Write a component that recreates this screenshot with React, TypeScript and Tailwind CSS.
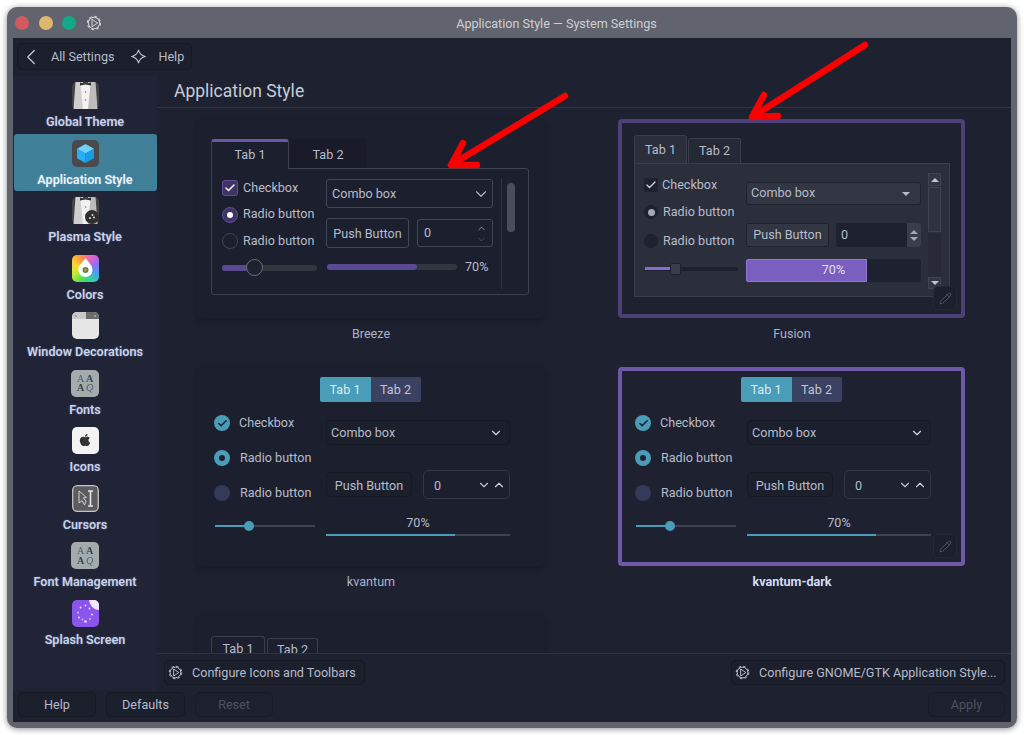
import { Check, ChevronDown, ChevronLeft, ChevronUp, Pencil } from 'lucide-react';
import { FaApple } from 'react-icons/fa';
import type { ReactNode } from 'react';

function GearPlay({ className }: { className?: string }) {
  return (
    <svg viewBox="0 0 18 18" className={className} fill="none" stroke="currentColor">
      <circle cx="9" cy="9" r="6.4" strokeWidth="1.2" />
      <circle cx="9" cy="9" r="7.5" strokeWidth="1.2" strokeDasharray="3 2.9" />
      <path d="M6.8 4.8 L13 9 L6.8 13.2 Z" strokeWidth="1.1" strokeLinejoin="round" />
    </svg>
  );
}

function Tuxedo({ badge }: { badge?: boolean }) {
  return (
    <svg viewBox="0 0 27 27" className="w-[27px] h-[27px]">
      <rect width="27" height="27" rx="5" fill="#444446" />
      <path d="M3.5 0 H11 L13 27 H1.5 Z" fill="#cfcfcf" />
      <path d="M23.5 0 H16 L14 27 H25.5 Z" fill="#bcbcbc" />
      <path d="M8.5 2 H18.5 L16 27 H11 Z" fill="#f2f2f2" />
      <path d="M8 0.5 L13.5 2 L19 0.5 V3.5 L13.5 2.6 L8 3.5 Z" fill="#2e2e2e" />
      <circle cx="13.5" cy="10" r="0.8" fill="#777" />
      <circle cx="13.5" cy="18" r="0.8" fill="#777" />
      {badge && (
        <>
          <circle cx="20" cy="20" r="7" fill="#2f2f2f" />
          <circle cx="18" cy="21" r="1" fill="#ddd" />
          <circle cx="20.5" cy="18" r="1" fill="#ddd" />
          <circle cx="22" cy="20.5" r="1" fill="#ddd" />
        </>
      )}
    </svg>
  );
}

function Cube() {
  return (
    <svg viewBox="0 0 27 27" className="w-[27px] h-[27px]">
      <rect width="27" height="27" rx="5" fill="#4a4a4c" />
      <path d="M13.5 4 L22 8.7 L13.5 13.5 L5 8.7 Z" fill="#6fd0fa" />
      <path d="M5 8.7 L13.5 13.5 V23 L5 18.2 Z" fill="#26b0f3" />
      <path d="M22 8.7 L13.5 13.5 V23 L22 18.2 Z" fill="#1c9be8" />
    </svg>
  );
}

function Colors() {
  return (
    <div className="w-[27px] h-[27px] rounded-[5px] flex items-center justify-center bg-[conic-gradient(from_20deg,#f062c0,#9a6cf0,#4a9cf0,#38d0a0,#50e050,#c8e838,#f8d838,#f89838,#f062c0)]">
      <svg viewBox="0 0 27 27" className="w-[27px] h-[27px]">
        <path d="M13.5 3 C16 7 20.5 10 20.5 15 A7 7 0 0 1 6.5 15 C6.5 10 11 7 13.5 3 Z" fill="#fff" />
        <circle cx="13.5" cy="15" r="3" fill="#3f8f5a" />
        <circle cx="13.5" cy="15" r="1.4" fill="#e0883c" />
      </svg>
    </div>
  );
}

function WindowDeco() {
  return (
    <svg viewBox="0 0 27 27" className="w-[27px] h-[27px]">
      <rect width="27" height="27" rx="5" fill="#e6e6e6" />
      <path d="M5 0 H14 V7 H0 V5 A5 5 0 0 1 5 0 Z" fill="#c9c9c9" />
      <path d="M14 0 H22 A5 5 0 0 1 27 5 V7 H14 Z" fill="#6b6b6b" />
      <circle cx="4" cy="4" r="0.8" fill="#666" />
      <circle cx="23" cy="4" r="0.8" fill="#ddd" />
    </svg>
  );
}

function FontsIcon() {
  return (
    <div className="w-[28px] h-[27px] rounded-[5px] bg-[#a3acab] grid grid-cols-2 items-center justify-items-center px-[5px] py-[4px] text-[#3c4042] text-[10px] leading-[9px] font-['Liberation_Serif',serif] font-bold">
      <span className="font-normal text-[#555b5d]">A</span>
      <span>A</span>
      <span>A</span>
      <span className="font-normal italic text-[#555b5d]">Q</span>
    </div>
  );
}

function AppleIcon() {
  return (
    <div className="w-[27px] h-[27px] rounded-[5px] bg-[#f3f3f3] flex items-center justify-center">
      <FaApple className="w-[14px] h-[14px] text-[#333] -mt-px" />
    </div>
  );
}

function CursorIcon() {
  return (
    <svg viewBox="0 0 27 27" className="w-[27px] h-[27px]">
      <rect x="0.7" y="0.7" width="25.6" height="25.6" rx="4.5" fill="#5c5c5e" stroke="#c4c4c4" strokeWidth="1.3" />
      <path d="M7 6 L7 18 L10 15.5 L12.5 20 L14 16 L11 13 L14.5 12.5 Z" fill="none" stroke="#cfcfcf" strokeWidth="1" />
      <path d="M16 6 H21 M16 21 H21 M18.5 6 V21" stroke="#e4e4e4" strokeWidth="1.6" fill="none" />
    </svg>
  );
}

function SplashIcon() {
  const dots = [
    [13.5, 5.5], [8.5, 7.5], [6, 12.5], [7, 17.5], [13.5, 21.5], [18, 19], [20, 14.5], [17.5, 8.5], [10.5, 19.5],
  ];
  return (
    <svg viewBox="0 0 27 27" className="w-[27px] h-[27px]">
      <rect width="27" height="27" rx="5" fill="#8a55ec" />
      {dots.map(([cx, cy], i) => (
        <circle key={i} cx={cx} cy={cy} r={i === 4 ? 1.3 : 0.9} fill="#f0e8ff" opacity={i % 3 === 2 ? 0.7 : 1} />
      ))}
      <path d="M17 0 H22 A5 5 0 0 1 27 5 V10 C22 10 18 6 17 0 Z" fill="#efe8fb" />
    </svg>
  );
}

const sidebarItems: { label: string; icon: ReactNode; active?: boolean }[] = [
  { label: 'Global Theme', icon: <Tuxedo /> },
  { label: 'Application Style', icon: <Cube />, active: true },
  { label: 'Plasma Style', icon: <Tuxedo badge /> },
  { label: 'Colors', icon: <Colors /> },
  { label: 'Window Decorations', icon: <WindowDeco /> },
  { label: 'Fonts', icon: <FontsIcon /> },
  { label: 'Icons', icon: <AppleIcon /> },
  { label: 'Cursors', icon: <CursorIcon /> },
  { label: 'Font Management', icon: <FontsIcon /> },
  { label: 'Splash Screen', icon: <SplashIcon /> },
];

function BreezePreview() {
  return (
    <div className="pl-[10px] pt-[16px]">
      {/* tabs */}
      <div className="flex h-[29px]">
        <div className="w-[78px] h-[30px] relative z-10 bg-[#1c1f2d] border-x border-[#3f4250] border-t-[3px] border-t-[#6a54a8] rounded-t-[3px] flex items-center justify-center">Tab 1</div>
        <div className="w-[78px] bg-[#191b28] rounded-tr-[3px] pt-[3px] flex items-center justify-center">Tab 2</div>
      </div>
      <div className="w-[318px] h-[127px] border border-[#3f4250] rounded-b-[3px] rounded-tr-[3px] flex pl-[10px] pt-[10px]">
        <div className="w-[104px] flex flex-col gap-[8.5px]">
          <div className="h-[18px] flex items-center gap-[5px]">
            <div className="w-[16px] h-[16px] rounded-[3px] bg-[#3f3564] border border-[#5f4d94] flex items-center justify-center">
              <Check className="w-[12px] h-[12px] text-white" strokeWidth={3} />
            </div>
            Checkbox
          </div>
          <div className="h-[18px] flex items-center gap-[5px]">
            <div className="w-[16px] h-[16px] rounded-full bg-[#3f3564] border border-[#5f4d94] flex items-center justify-center">
              <div className="w-[6px] h-[6px] rounded-full bg-white" />
            </div>
            Radio button
          </div>
          <div className="h-[18px] flex items-center gap-[5px]">
            <div className="w-[16px] h-[16px] rounded-full border border-[#41444f]" />
            Radio button
          </div>
          <div className="h-[18px] flex items-center">
            <div className="w-[95px] h-[6px] rounded-full bg-[#33363f] relative">
              <div className="w-[26px] h-[6px] rounded-full bg-[#5a4a93]" />
              <div className="absolute left-[24px] -top-[6px] w-[17px] h-[17px] rounded-full bg-[#1e2130] border border-[#6d707b]" />
            </div>
          </div>
        </div>
        <div className="w-[167px] flex flex-col gap-[10px]">
          <div className="h-[29px] pt-px border border-[#434653] rounded-[3px] flex items-center justify-between pl-[5px] pr-[2px]">
            Combo box
            <ChevronDown className="w-[18px] h-[18px] text-[#b6bccb]" strokeWidth={1.5} />
          </div>
          <div className="flex items-center gap-[8px] h-[30px]">
            <div className="w-[83px] h-[30px] pt-[2px] border border-[#434653] rounded-[3px] flex items-center justify-center">Push Button</div>
            <div className="w-[76px] h-[28px] pt-px border border-[#434653] rounded-[3px] flex items-center justify-between pl-[6px] pr-[2px]">
              0
              <div className="flex flex-col">
                <ChevronUp className="w-[17px] h-[11px] text-[#b6bccb]" strokeWidth={1.5} />
                <ChevronDown className="w-[17px] h-[11px] text-[#5c606c]" strokeWidth={1.5} />
              </div>
            </div>
          </div>
          <div className="h-[18px] flex items-center whitespace-nowrap">
            <div className="w-[130px] ml-px h-[6px] rounded-full bg-[#33363f]">
              <div className="w-[90px] h-[6px] rounded-full bg-[#5a4a93]" />
            </div>
            <span className="ml-[8px] pt-px">70%</span>
          </div>
        </div>
        <div className="w-px h-[111px] -mt-px bg-[#30333f] ml-[8px]" />
        <div className="w-[8px] h-[49px] mt-[4px] ml-[5px] rounded-full bg-[#4a4d5e]" />
      </div>
    </div>
  );
}

function FusionPreview() {
  return (
    <div className="pl-[12px] pt-[13px]">
      <div className="flex items-end h-[27px] gap-px">
        <div className="w-[53px] h-[28px] pt-px relative z-10 bg-[#2b2e3b] border border-b-0 border-[#3a3d4a] rounded-t-[3px] flex items-center justify-center">Tab 1</div>
        <div className="w-[53px] h-[25px] bg-[#252835] border border-b-0 border-[#3a3d4a] rounded-t-[3px] flex items-center justify-center">Tab 2</div>
      </div>
      <div className="w-[316px] h-[134px] bg-[#2b2e3b] border border-[#3a3d4a] flex pl-[9px] pt-[12px]">
        <div className="w-[102px]">
          <div className="h-[18px] flex items-center gap-[4px]">
            <div className="w-[14px] h-[14px] rounded-[2px] bg-[#1e2130] flex items-center justify-center">
              <Check className="w-[12px] h-[12px] text-[#d5d8e0]" strokeWidth={2.5} />
            </div>
            Checkbox
          </div>
          <div className="h-[18px] mt-[9px] flex items-center gap-[5px]">
            <div className="w-[14px] h-[14px] rounded-full bg-[#1e2130] flex items-center justify-center">
              <div className="w-[7px] h-[7px] rounded-full bg-[#a6a9b4]" />
            </div>
            Radio button
          </div>
          <div className="h-[18px] mt-[11px] flex items-center gap-[5px]">
            <div className="w-[14px] h-[14px] rounded-full bg-[#1e2130]" />
            Radio button
          </div>
          <div className="h-[18px] mt-[10px] flex items-center pl-px">
            <div className="w-[93px] h-[4px] rounded-full bg-[#1e2130] relative">
              <div className="w-[25px] h-[3px] bg-[#8a6bd0]" />
              <div className="absolute left-[25px] -top-[4px] w-[11px] h-[12px] rounded-[2px] bg-[#3a3d4a] border border-[#1e2130]" />
            </div>
          </div>
        </div>
        <div className="w-[175px]">
          <div className="h-[23px] mt-[6px] bg-[#323542] border border-[#20222e] rounded-[3px] flex items-center justify-between pl-[4px] pr-[10px]">
            Combo box
            <div className="w-0 h-0 border-x-[4px] border-x-transparent border-t-[4px] border-t-[#b6bccb]" />
          </div>
          <div className="flex gap-[7px] mt-[18px]">
            <div className="w-[83px] h-[24px] bg-[#323542] border border-[#20222e] rounded-[2px] flex items-center justify-center">Push Button</div>
            <div className="w-[85px] h-[24px] bg-[#1e2130] rounded-[3px] flex items-center justify-between pl-[5px]">
              0
              <div className="w-[14px] h-[24px] bg-[#3a3d4a] rounded-r-[3px] flex flex-col items-center justify-center gap-[3px]">
                <div className="w-0 h-0 border-x-[4px] border-x-transparent border-b-[4px] border-b-[#a6a9b4]" />
                <div className="w-0 h-0 border-x-[4px] border-x-transparent border-t-[4px] border-t-[#a6a9b4]" />
              </div>
            </div>
          </div>
          <div className="h-[23px] mt-[12px] bg-[#1e2130] rounded-[3px] relative">
            <div className="w-[121px] h-[23px] bg-[#7b5fc0] border border-[#9278d4] rounded-l-[2px]" />
            <span className="absolute inset-0 flex items-center justify-center text-[#e2dff0]">70%</span>
          </div>
        </div>
        <div className="w-[13px] ml-[7px] -mt-[3px] flex flex-col gap-px">
          <div className="h-[13px] bg-[#323542] border border-[#3f4250] flex items-center justify-center">
            <div className="w-0 h-0 border-x-[4px] border-x-transparent border-b-[4px] border-b-[#c0c3cc]" />
          </div>
          <div className="h-[45px] bg-[#2f323f] border border-[#3f4250]" />
          <div className="h-[43px] bg-[#272a36]" />
          <div className="h-[12px] bg-[#323542] border border-[#3f4250] flex items-center justify-center">
            <div className="w-0 h-0 border-x-[4px] border-x-transparent border-t-[4px] border-t-[#c0c3cc]" />
          </div>
        </div>
      </div>
    </div>
  );
}

function KvantumPreview() {
  return (
    <div className="pt-[6px]">
      <div className="flex justify-center h-[25px] pr-[1px]">
        <div className="w-[51px] pt-px bg-[#4a9db8] text-[#d8eaf0] rounded-l-[2px] flex items-center justify-center">Tab 1</div>
        <div className="w-[50px] pt-px bg-[#3b4160] text-[#c0c5d6] rounded-r-[2px] flex items-center justify-center">Tab 2</div>
      </div>
      <div className="flex pl-[13px]">
        <div className="w-[112px] pt-[11px] flex flex-col gap-[15px]">
          <div className="h-[20px] flex items-center gap-[9px]">
            <div className="w-[16px] h-[16px] rounded-full bg-[#4a9db8] flex items-center justify-center">
              <Check className="w-[11px] h-[11px] text-[#1e2130]" strokeWidth={3.5} />
            </div>
            Checkbox
          </div>
          <div className="h-[20px] flex items-center gap-[10px]">
            <div className="w-[16px] h-[16px] rounded-full border-[5px] border-[#4a9db8] bg-[#1e2130]" />
            Radio button
          </div>
          <div className="h-[20px] flex items-center gap-[10px]">
            <div className="w-[16px] h-[16px] rounded-full bg-[#343b5a]" />
            Radio button
          </div>
          <div className="h-[20px] -mt-[2px] flex items-center pl-px">
            <div className="w-[100px] h-[2px] bg-[#3f4250] relative">
              <div className="w-[30px] h-[2px] bg-[#4a9db8]" />
              <div className="absolute left-[29px] -top-[4px] w-[10px] h-[10px] rounded-full bg-[#4a9db8]" />
            </div>
          </div>
        </div>
        <div className="w-[184px]">
          <div className="h-[25px] mt-[18px] pt-[2px] bg-[#1c1f2c] border border-[#171923] rounded-[5px] flex items-center justify-between pl-[4px] pr-[6px]">
            Combo box
            <ChevronDown className="w-[14px] h-[14px] -mt-[2px] text-[#d0d4de]" strokeWidth={2} />
          </div>
          <div className="flex items-center gap-[11px] mt-[25px] h-[29px]">
            <div className="w-[86px] h-[25px] pt-[3px] bg-[#1c1f2c] border border-[#171923] rounded-[5px] flex items-center justify-center">Push Button</div>
            <div className="w-[87px] h-[29px] pt-[3px] border border-[#343746] rounded-[5px] flex items-center justify-between pl-[10px] pr-[3px]">
              0
              <div className="flex items-center gap-[1px] -mt-[3px]">
                <ChevronDown className="w-[14px] h-[14px] text-[#c0c4ce]" strokeWidth={2} />
                <ChevronUp className="w-[14px] h-[14px] text-[#d0d4de]" strokeWidth={2} />
              </div>
            </div>
          </div>
          <div className="h-[16px] mt-[16px] pt-px flex items-center justify-center">70%</div>
          <div className="h-[2px] mt-[3px] bg-[#3f4250]">
            <div className="w-[129px] h-[2px] bg-[#4a9db8]" />
          </div>
        </div>
      </div>
    </div>
  );
}

function EditButton() {
  return (
    <div className="absolute right-[4px] bottom-[4px] w-[24px] h-[24px] rounded-[5px] bg-[#1c1f2c] border border-[#252836] flex items-center justify-center">
      <Pencil className="w-[13px] h-[13px] text-[#5a5d69]" strokeWidth={1.5} />
    </div>
  );
}

function StyleCard({ name, children, border, edit, bold }: { name?: string; children: ReactNode; border?: string; edit?: boolean; bold?: boolean }) {
  return (
    <div className="h-[248px]">
      <div className={`relative h-[199px] w-[347px] border-4 rounded-[4px] ${border ?? 'border-transparent bg-[#1c1f2d] shadow-[0_3px_8px_rgba(0,0,0,0.25)]'}`}>
        {children}
        {edit && <EditButton />}
      </div>
      {name && (
        <div className={`h-[31px] pt-[2px] flex items-center justify-center ${bold ? 'font-bold text-[#d4dcf2]' : 'text-[#aab2c8]'}`}>{name}</div>
      )}
    </div>
  );
}

function Btn({ className, children, disabled }: { className?: string; children: ReactNode; disabled?: boolean }) {
  return (
    <div className={`h-[25px] pt-px rounded-[5px] border flex items-center ${disabled ? 'border-[#191b26] bg-[#1d202d] text-[#4f525e]' : 'border-[#171923] bg-[#1c1f2c] text-[#b6bccb]'} ${className ?? 'justify-center'}`}>
      {children}
    </div>
  );
}

export default function App() {
  return (
    <div className="relative w-[1024px] h-[735px] overflow-hidden bg-white pt-[7px] px-[7px] font-['Roboto',sans-serif] text-[12.6px] text-[#b6bccb]">
      <div className="w-[1010px] h-[721px] flex flex-col rounded-[10px] bg-[#61636e] shadow-[0_1px_6px_rgba(0,0,0,0.45)] px-[6px] pb-[6px]">
        {/* Title bar */}
        <div className="h-[31px] flex items-center relative">
          <div className="flex items-center gap-[9.5px] pl-[2px]">
            <div className="w-[14px] h-[14px] rounded-full bg-[#d05a5e]" />
            <div className="w-[14px] h-[14px] rounded-full bg-[#dfb66e]" />
            <div className="w-[14px] h-[14px] rounded-full bg-[#13a887]" />
            <GearPlay className="w-[16px] h-[16px] text-[#d0d1d6]" />
          </div>
          <div className="absolute inset-0 flex items-center justify-center text-[#cdd0d6] pl-[89px] pt-[4px]">Application Style — System Settings</div>
        </div>

        <div className="flex-1 flex flex-col bg-[#1e2130] min-h-0">
          {/* Toolbar */}
          <div className="h-[38px] pl-[4px] pt-[5px]">
            <div className="w-[175px] h-[27px] pt-px rounded-[5px] border border-[#171923] bg-[#1c1f2c] flex items-center">
              <ChevronLeft className="w-[26px] h-[26px] text-[#c4c8d2] -mt-px" strokeWidth={1.2} />
              <span className="ml-[7px]">All Settings</span>
              <svg viewBox="0 0 16 16" className="w-[15px] h-[15px] ml-[17px] -mt-px text-[#c4c8d2]" fill="none" stroke="currentColor" strokeWidth="1.1">
                <path d="M8 1 C8.8 4.5 11.5 7 15 8 C11.5 9 8.8 11.5 8 15 C7.2 11.5 4.5 9 1 8 C4.5 7 7.2 4.5 8 1 Z" />
              </svg>
              <span className="ml-[12px]">Help</span>
            </div>
          </div>

          <div className="flex-1 flex min-h-0">
            {/* Sidebar */}
            <div className="w-[144px] bg-[#212436]">
              {sidebarItems.map((item) => (
                <div
                  key={item.label}
                  className={`h-[57.5px] ml-px pr-px flex flex-col items-center pt-[6px] font-semibold whitespace-nowrap [text-shadow:0_0_2px_rgba(170,195,255,0.35)] ${item.active ? 'bg-[#3f8098] rounded-[3px] text-[#eef4f8]' : 'text-[#c8d2ec]'}`}
                >
                  {item.icon}
                  <span className="mt-[6px] leading-[14px]">{item.label}</span>
                </div>
              ))}
            </div>

            {/* Main */}
            <div className="flex-1 min-w-0 flex flex-col">
              <div className="h-[32px] border-b border-[#31343f] pl-[17px] flex items-center text-[17.5px] text-[#c8cdda]">Application Style</div>
              <div className="h-[545px] overflow-hidden pt-[11px] pl-[40px] grid grid-cols-[348px_348px] gap-x-[73px] content-start">
                <StyleCard name="Breeze"><BreezePreview /></StyleCard>
                <StyleCard name="Fusion" border="border-[#4d4078]" edit><FusionPreview /></StyleCard>
                <StyleCard name="kvantum"><KvantumPreview /></StyleCard>
                <StyleCard name="kvantum-dark" border="border-[#6f58a8]" edit bold><KvantumPreview /></StyleCard>
                <StyleCard>
                  <div className="pl-[10px] pt-[17px] flex items-end gap-[2px]">
                    <div className="w-[54px] h-[20px] pt-[3px] border border-b-0 border-[#3a3e4f] rounded-t-[3px] text-center">Tab 1</div>
                    <div className="w-[51px] h-[18px] pt-[2px] border border-b-0 border-[#3a3e4f] rounded-t-[3px] text-center">Tab 2</div>
                  </div>
                </StyleCard>
              </div>
              <div className="h-[37px] border-t border-[#31343f] flex justify-between pt-[6px] pl-[7px] pr-[6px]">
                <Btn className="w-[201px] pl-[3px] gap-[9px]">
                  <GearPlay className="w-[15px] h-[15px] -mt-px text-[#c4c8d2]" />
                  Configure Icons and Toolbars
                </Btn>
                <Btn className="w-[274px] pl-[3px] gap-[9px]">
                  <GearPlay className="w-[15px] h-[15px] -mt-px text-[#c4c8d2]" />
                  Configure GNOME/GTK Application Style...
                </Btn>
              </div>
            </div>
          </div>

          {/* Bottom buttons */}
          <div className="h-[32px] flex items-start pt-[2px] pl-[5px] pr-[6px] gap-[10px] bg-[#1e2130]">
            <Btn className="w-[78px] justify-center">Help</Btn>
            <Btn className="w-[79px] justify-center">Defaults</Btn>
            <Btn className="w-[78px] justify-center" disabled>Reset</Btn>
            <Btn className="w-[77px] ml-auto justify-center" disabled>Apply</Btn>
          </div>
        </div>
      </div>

      {/* Red arrows drawn over the screenshot */}
      <svg viewBox="0 0 1024 735" className="absolute inset-0 w-[1024px] h-[735px] pointer-events-none" fill="none" stroke="#fb0000" strokeWidth="6.5" strokeLinecap="round" strokeLinejoin="round">
        <path d="M565 96 L451 165 M463 143 L451 165 L477 165" />
        <path d="M865 45 L752 117 M764 95 L752 117 L778 116" />
      </svg>
    </div>
  );
}
